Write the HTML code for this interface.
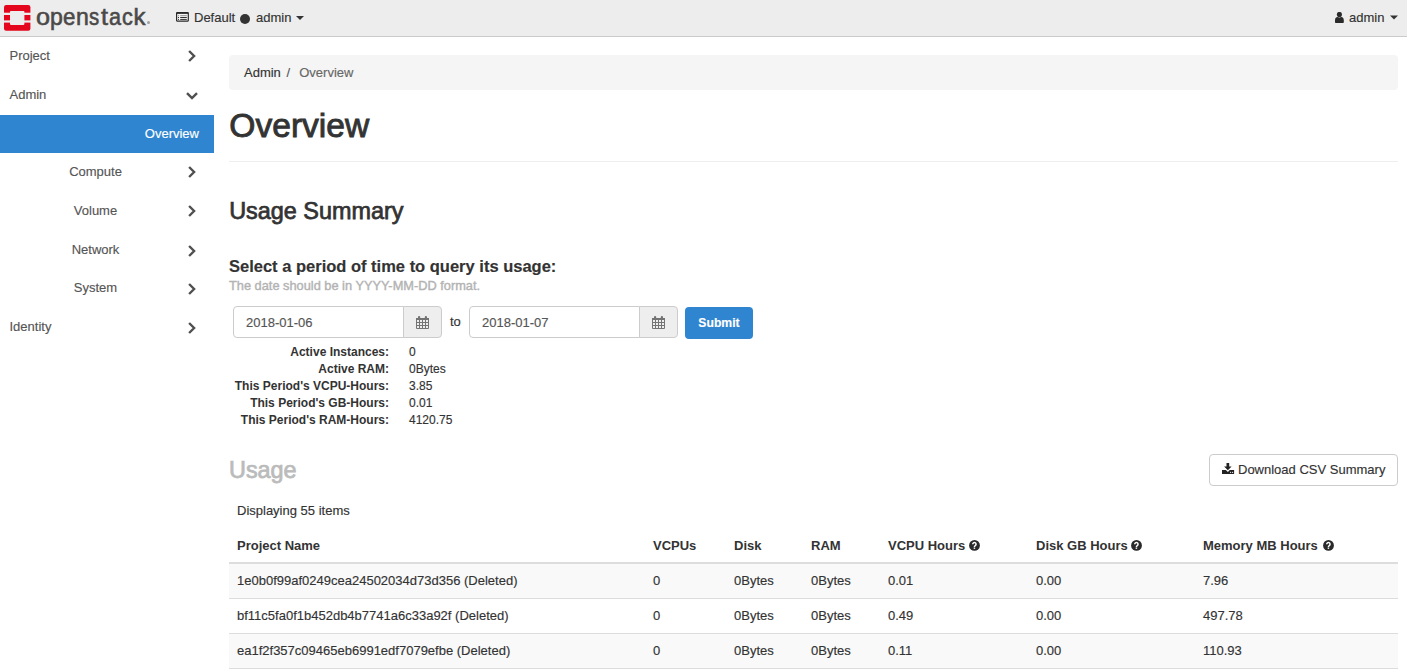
<!DOCTYPE html>
<html><head><meta charset="utf-8">
<style>
*{box-sizing:border-box;margin:0;padding:0}
html,body{width:1407px;height:670px;overflow:hidden;background:#fff}
body{font-family:"Liberation Sans",sans-serif;color:#333;font-size:13px;position:relative;-webkit-text-stroke-width:0.15px}
.a{position:absolute;white-space:nowrap}
#hdr{left:0;top:0;width:1407px;height:37px;background:#ededed;border-bottom:1px solid #cbcbcb}
.t13{font-size:13px;line-height:16px}
.side{color:#555}
.chev{position:absolute}
.bc{left:229px;top:55px;width:1169px;height:35px;background:#f5f5f5;border-radius:4px}
.inp{height:32px;border:1px solid #ccc;background:#fff}
.addon{height:32px;border:1px solid #ccc;background:#eee}
.btn-blue{background:#2f85d0;border-radius:4px;color:#fff;font-weight:bold}
.dt{-webkit-text-stroke-width:0;font-weight:bold;font-size:12px;line-height:14px;text-align:right}
.dd{font-size:12px;line-height:14px}
.row{left:229px;width:1169px;height:35px;border-bottom:1px solid #ddd}
.th{-webkit-text-stroke-width:0;font-weight:bold;font-size:13px;line-height:16px}
.td{font-size:13px;line-height:16px}
.logo span{position:absolute;top:2px;font-size:24px;line-height:30px;color:#4b4948;-webkit-text-stroke:0.6px #4b4948;transform-origin:0 0}
</style></head>
<body>
<!-- header -->
<div id="hdr" class="a"></div>
<svg class="a" style="left:4px;top:5px" width="27" height="26" viewBox="0 0 27 26">
  <rect x="0" y="0" width="26.4" height="25.7" rx="2.2" fill="#e4061c"/>
  <rect x="6" y="6" width="14.4" height="13.9" rx="0.8" fill="#ededed"/>
  <rect x="-1" y="7.7" width="7.5" height="2.3" fill="#ededed"/>
  <rect x="-1" y="15.4" width="7.5" height="2.2" fill="#ededed"/>
  <rect x="20" y="7.7" width="7.5" height="2.3" fill="#ededed"/>
  <rect x="20" y="15.4" width="7.5" height="2.2" fill="#ededed"/>
</svg>
<div class="logo">
<span style="left:35.6px;transform:scaleX(1.05)">o</span><span style="left:49.6px;transform:scaleX(0.96)">p</span><span style="left:63.3px;transform:scaleX(0.93)">e</span><span style="left:76.1px;transform:scaleX(0.96)">n</span><span style="left:89.2px;transform:scaleX(0.85)">s</span><span style="left:101.2px;transform:scaleX(1.05)">t</span><span style="left:109.3px;transform:scaleX(0.9)">a</span><span style="left:122.1px;transform:scaleX(0.9)">c</span><span style="left:133.6px;transform:scaleX(1.0)">k</span>
</div>
<div class="a" style="left:147px;top:21px;width:3.4px;height:3.4px;border-radius:50%;background:#a0a0a0"></div>

<svg class="a" style="left:176px;top:12px" width="13" height="10" viewBox="0 0 13 10">
  <rect x="0" y="0" width="12.9" height="9.7" rx="1.1" fill="#2a2a2a"/>
  <rect x="1.2" y="1.9" width="10.5" height="6.6" fill="#f4f4f4"/>
  <rect x="2" y="3.1" width="1" height="1.1" fill="#999"/><rect x="4.2" y="3.1" width="6.6" height="1.1" fill="#999"/>
  <rect x="2" y="5" width="1" height="1" fill="#333"/><rect x="4.2" y="5" width="6.6" height="1" fill="#333"/>
  <rect x="2" y="6.9" width="1" height="1" fill="#333"/><rect x="4.2" y="6.9" width="6.6" height="1" fill="#333"/>
</svg>
<div class="a t13" style="left:194px;top:10px;color:#333">Default</div>
<div class="a" style="left:240px;top:14px;width:10px;height:10px;border-radius:50%;background:#333"></div>
<div class="a t13" style="left:256px;top:10px;color:#333">admin</div>
<svg class="a" style="left:296px;top:16px" width="8" height="4" viewBox="0 0 8 4"><path d="M0 0h8l-4 4z" fill="#333"/></svg>

<svg class="a" style="left:1335px;top:11.9px" width="9" height="11" viewBox="0 0 9 11">
  <circle cx="4.4" cy="2.45" r="2.55" fill="#2a2a2a"/>
  <path d="M0 8.2C0 6.2 1.3 5 2.4 5C3 5.3 3.7 5.5 4.4 5.5S5.8 5.3 6.4 5C7.5 5 8.8 6.2 8.8 8.2V9.9C8.8 10.5 8.4 10.9 7.8 10.9H1C0.4 10.9 0 10.5 0 9.9Z" fill="#2a2a2a"/>
</svg>
<div class="a t13" style="left:1349px;top:10px;color:#333">admin</div>
<svg class="a" style="left:1390px;top:15px" width="8" height="5" viewBox="0 0 8 4"><path d="M0 0h8l-4 4z" fill="#333"/></svg>

<!-- sidebar -->
<div class="a t13 side" style="left:9.5px;top:48px">Project</div>
<svg class="a" style="left:188px;top:50px" width="9" height="13" viewBox="0 0 9 13"><path d="M1.1 1L6.1 6L1.1 11" fill="none" stroke="#505050" stroke-width="2.4"/></svg>
<div class="a t13 side" style="left:9.5px;top:87px">Admin</div>
<svg class="a" style="left:186px;top:91.6px" width="13" height="9" viewBox="0 0 13 9"><path d="M1 1.1L6 6.1L11 1.1" fill="none" stroke="#505050" stroke-width="2.4"/></svg>
<div class="a" style="left:0;top:115px;width:214px;height:38px;background:#2f85d0"></div>
<div class="a t13" style="left:0;top:126px;width:199px;text-align:right;color:#fff;font-weight:normal">Overview</div>
<div class="a t13 side" style="left:0;top:164px;width:191px;text-align:center">Compute</div>
<svg class="a" style="left:188px;top:166.4px" width="9" height="13" viewBox="0 0 9 13"><path d="M1.1 1L6.1 6L1.1 11" fill="none" stroke="#505050" stroke-width="2.4"/></svg>
<div class="a t13 side" style="left:0;top:203px;width:191px;text-align:center">Volume</div>
<svg class="a" style="left:188px;top:205.2px" width="9" height="13" viewBox="0 0 9 13"><path d="M1.1 1L6.1 6L1.1 11" fill="none" stroke="#505050" stroke-width="2.4"/></svg>
<div class="a t13 side" style="left:0;top:242px;width:191px;text-align:center">Network</div>
<svg class="a" style="left:188px;top:244.6px" width="9" height="13" viewBox="0 0 9 13"><path d="M1.1 1L6.1 6L1.1 11" fill="none" stroke="#505050" stroke-width="2.4"/></svg>
<div class="a t13 side" style="left:0;top:280px;width:191px;text-align:center">System</div>
<svg class="a" style="left:188px;top:282.7px" width="9" height="13" viewBox="0 0 9 13"><path d="M1.1 1L6.1 6L1.1 11" fill="none" stroke="#505050" stroke-width="2.4"/></svg>
<div class="a t13 side" style="left:9.5px;top:319px">Identity</div>
<svg class="a" style="left:188px;top:321.6px" width="9" height="13" viewBox="0 0 9 13"><path d="M1.1 1L6.1 6L1.1 11" fill="none" stroke="#505050" stroke-width="2.4"/></svg>

<!-- main -->
<div class="a bc"></div>
<div class="a t13" style="left:244px;top:65px;color:#333">Admin <span style="color:#555;padding:0 5.5px 0 2px">/</span> <span style="color:#666">Overview</span></div>

<div class="a" style="left:229.3px;top:106.3px;font-size:33.6px;line-height:40px;color:#333;-webkit-text-stroke:0.9px #333">Overview</div>
<div class="a" style="left:229px;top:161px;width:1169px;height:1px;background:#eee"></div>

<div class="a" style="left:229.2px;top:198px;font-size:23.4px;line-height:26px;color:#333;-webkit-text-stroke:0.75px #333">Usage Summary</div>
<div class="a" style="left:229px;top:256px;font-size:16.5px;line-height:20px;font-weight:bold;color:#333">Select a period of time to query its usage:</div>
<div class="a" style="left:229px;top:279px;font-size:12.8px;line-height:14px;color:#b3b3b3;-webkit-text-stroke-width:0.4px">The date should be in YYYY-MM-DD format.</div>

<div class="a inp" style="left:233px;top:306px;width:171px;border-radius:4px 0 0 4px"></div>
<div class="a t13" style="left:246px;top:315px;color:#555">2018-01-06</div>
<div class="a addon" style="left:403px;top:306px;width:39px;border-radius:0 4px 4px 0"></div>
<svg class="a" style="left:416px;top:316px" width="13" height="13" viewBox="0 0 13 13"><path fill-rule="evenodd" fill="#747474" d="M0 2H13V12Q13 13 12 13H1Q0 13 0 12Z M1 4h2v2h-2Z M4 4h2v2h-2Z M7 4h2v2h-2Z M10 4h2v2h-2Z M1 7h2v2h-2Z M4 7h2v2h-2Z M7 7h2v2h-2Z M10 7h2v2h-2Z M1 10h2v2h-2Z M4 10h2v2h-2Z M7 10h2v2h-2Z M10 10h2v2h-2Z "/><rect x="2" y="0" width="2.2" height="3.5" rx="1" fill="#747474"/><rect x="8.8" y="0" width="2.2" height="3.5" rx="1" fill="#747474"/></svg>
<div class="a t13" style="left:450px;top:314px;color:#333">to</div>
<div class="a inp" style="left:469px;top:306px;width:171px;border-radius:4px 0 0 4px"></div>
<div class="a t13" style="left:482px;top:315px;color:#555">2018-01-07</div>
<div class="a addon" style="left:639px;top:306px;width:39px;border-radius:0 4px 4px 0"></div>
<svg class="a" style="left:652px;top:316px" width="13" height="13" viewBox="0 0 13 13"><path fill-rule="evenodd" fill="#747474" d="M0 2H13V12Q13 13 12 13H1Q0 13 0 12Z M1 4h2v2h-2Z M4 4h2v2h-2Z M7 4h2v2h-2Z M10 4h2v2h-2Z M1 7h2v2h-2Z M4 7h2v2h-2Z M7 7h2v2h-2Z M10 7h2v2h-2Z M1 10h2v2h-2Z M4 10h2v2h-2Z M7 10h2v2h-2Z M10 10h2v2h-2Z "/><rect x="2" y="0" width="2.2" height="3.5" rx="1" fill="#747474"/><rect x="8.8" y="0" width="2.2" height="3.5" rx="1" fill="#747474"/></svg>
<div class="a btn-blue" style="left:685px;top:307px;width:68px;height:32px"></div>
<div class="a" style="left:685px;top:315px;width:68px;text-align:center;font-size:12.2px;line-height:16px;font-weight:bold;color:#fff">Submit</div>

<div class="a dt" style="left:200px;top:345px;width:189px">Active Instances:</div>
<div class="a dd" style="left:409px;top:345px">0</div>
<div class="a dt" style="left:200px;top:362px;width:189px">Active RAM:</div>
<div class="a dd" style="left:409px;top:362px">0Bytes</div>
<div class="a dt" style="left:200px;top:379px;width:189px">This Period's VCPU-Hours:</div>
<div class="a dd" style="left:409px;top:379px">3.85</div>
<div class="a dt" style="left:200px;top:396px;width:189px">This Period's GB-Hours:</div>
<div class="a dd" style="left:409px;top:396px">0.01</div>
<div class="a dt" style="left:200px;top:413px;width:189px">This Period's RAM-Hours:</div>
<div class="a dd" style="left:409px;top:413px">4120.75</div>

<div class="a" style="left:229px;top:457px;font-size:23.4px;line-height:26px;color:#bbb;-webkit-text-stroke:0.75px #bbb">Usage</div>
<div class="a" style="left:1209px;top:454px;width:189px;height:32px;border:1px solid #ccc;border-radius:4px;background:#fff"></div>
<svg class="a" style="left:1222px;top:462.9px" width="13" height="11" viewBox="0 0 13 11"><path fill="#222" d="M4.5 0H7.2V3.5H9.6L5.85 7.3L2.1 3.5H4.5Z"/><path fill="#222" fill-rule="evenodd" d="M0 7.1H3.9L5.85 9.1L7.8 7.1H12.1V10.9H0Z M8 9.3a0.6 0.6 0 1 0 1.2 0a0.6 0.6 0 1 0 -1.2 0Z M10 9.3a0.6 0.6 0 1 0 1.2 0a0.6 0.6 0 1 0 -1.2 0Z"/></svg>
<div class="a t13" style="left:1238px;top:462px;color:#333">Download CSV Summary</div>

<div class="a t13" style="left:237px;top:503px">Displaying 55 items</div>

<!-- table -->
<div class="a" style="left:229px;top:562px;width:1169px;height:2px;background:#ddd"></div>
<div class="a th" style="left:237px;top:538px">Project Name</div>
<div class="a th" style="left:653px;top:538px">VCPUs</div>
<div class="a th" style="left:734px;top:538px">Disk</div>
<div class="a th" style="left:811px;top:538px">RAM</div>
<div class="a th" style="left:888px;top:538px">VCPU Hours</div>
<div class="a th" style="left:1036px;top:538px">Disk GB Hours</div>
<div class="a th" style="left:1203px;top:538px">Memory MB Hours</div>

<svg class="a" style="left:969px;top:539.9px" width="11" height="11" viewBox="0 0 11 11"><circle cx="5.5" cy="5.4" r="5.4" fill="#2a2a2a"/><path d="M3.75 4.3A1.65 1.65 0 1 1 6.4 5.5C5.8 5.9 5.4 6.1 5.4 6.9" fill="none" stroke="#fff" stroke-width="1.5"/><rect x="4.65" y="7.5" width="1.5" height="1.35" fill="#fff"/></svg>
<svg class="a" style="left:1131.2px;top:539.9px" width="11" height="11" viewBox="0 0 11 11"><circle cx="5.5" cy="5.4" r="5.4" fill="#2a2a2a"/><path d="M3.75 4.3A1.65 1.65 0 1 1 6.4 5.5C5.8 5.9 5.4 6.1 5.4 6.9" fill="none" stroke="#fff" stroke-width="1.5"/><rect x="4.65" y="7.5" width="1.5" height="1.35" fill="#fff"/></svg>
<svg class="a" style="left:1323.3px;top:539.9px" width="11" height="11" viewBox="0 0 11 11"><circle cx="5.5" cy="5.4" r="5.4" fill="#2a2a2a"/><path d="M3.75 4.3A1.65 1.65 0 1 1 6.4 5.5C5.8 5.9 5.4 6.1 5.4 6.9" fill="none" stroke="#fff" stroke-width="1.5"/><rect x="4.65" y="7.5" width="1.5" height="1.35" fill="#fff"/></svg>
<div class="a row" style="top:564px;background:#f9f9f9"></div>
<div class="a row" style="top:599px;background:#fff"></div>
<div class="a row" style="top:634px;background:#f9f9f9"></div>

<div class="a td" style="left:237px;top:573px">1e0b0f99af0249cea24502034d73d356 (Deleted)</div>
<div class="a td" style="left:653px;top:573px">0</div>
<div class="a td" style="left:734px;top:573px">0Bytes</div>
<div class="a td" style="left:811px;top:573px">0Bytes</div>
<div class="a td" style="left:888px;top:573px">0.01</div>
<div class="a td" style="left:1036px;top:573px">0.00</div>
<div class="a td" style="left:1203px;top:573px">7.96</div>

<div class="a td" style="left:237px;top:608px">bf11c5fa0f1b452db4b7741a6c33a92f (Deleted)</div>
<div class="a td" style="left:653px;top:608px">0</div>
<div class="a td" style="left:734px;top:608px">0Bytes</div>
<div class="a td" style="left:811px;top:608px">0Bytes</div>
<div class="a td" style="left:888px;top:608px">0.49</div>
<div class="a td" style="left:1036px;top:608px">0.00</div>
<div class="a td" style="left:1203px;top:608px">497.78</div>

<div class="a td" style="left:237px;top:643px">ea1f2f357c09465eb6991edf7079efbe (Deleted)</div>
<div class="a td" style="left:653px;top:643px">0</div>
<div class="a td" style="left:734px;top:643px">0Bytes</div>
<div class="a td" style="left:811px;top:643px">0Bytes</div>
<div class="a td" style="left:888px;top:643px">0.11</div>
<div class="a td" style="left:1036px;top:643px">0.00</div>
<div class="a td" style="left:1203px;top:643px">110.93</div>
</body></html>
